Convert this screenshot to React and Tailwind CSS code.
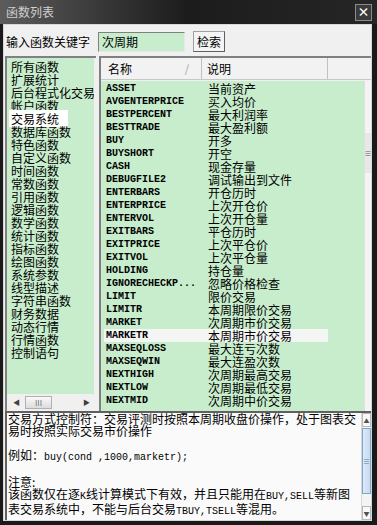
import React from "react";

const CN = { fontFamily: '"Noto Sans CJK SC", "Noto Sans", sans-serif' };
const MONO = { fontFamily: '"Liberation Mono", "DejaVu Sans Mono", monospace' };

const CATS = [
  "所有函数", "扩展统计", "后台程式化交易", "帐户函数", "交易系统", "数据库函数",
  "特色函数", "自定义函数", "时间函数", "常数函数", "引用函数", "逻辑函数",
  "数学函数", "统计函数", "指标函数", "绘图函数", "系统参数", "线型描述",
  "字符串函数", "财务数据", "动态行情", "行情函数", "控制语句",
];

const FUNCS = [
  ["ASSET", "当前资产"],
  ["AVGENTERPRICE", "买入均价"],
  ["BESTPERCENT", "最大利润率"],
  ["BESTTRADE", "最大盈利额"],
  ["BUY", "开多"],
  ["BUYSHORT", "开空"],
  ["CASH", "现金存量"],
  ["DEBUGFILE2", "调试输出到文件"],
  ["ENTERBARS", "开仓历时"],
  ["ENTERPRICE", "上次开仓价"],
  ["ENTERVOL", "上次开仓量"],
  ["EXITBARS", "平仓历时"],
  ["EXITPRICE", "上次平仓价"],
  ["EXITVOL", "上次平仓量"],
  ["HOLDING", "持仓量"],
  ["IGNORECHECKP...", "忽略价格检查"],
  ["LIMIT", "限价交易"],
  ["LIMITR", "本周期限价交易"],
  ["MARKET", "次周期市价交易"],
  ["MARKETR", "本周期市价交易"],
  ["MAXSEQLOSS", "最大连亏次数"],
  ["MAXSEQWIN", "最大连盈次数"],
  ["NEXTHIGH", "次周期最高交易"],
  ["NEXTLOW", "次周期最低交易"],
  ["NEXTMID", "次周期中价交易"],
];

function A({ children }) {
  // ascii runs inside the chinese help text
  return <span className="text-[10px]" style={MONO}>{children}</span>;
}

export default function App() {
  return (
    <div className="w-[377px] h-[525px] bg-[#1a1a1a] flex flex-col overflow-hidden" style={CN}>
      {/* title bar */}
      <div className="h-[24px] shrink-0 flex items-center justify-between pl-[6px] pr-[5px] bg-gradient-to-r from-[#5c5c5c] via-[#1c1c1c] to-[#262626]">
        <span className="text-[12px] leading-none text-[#cfcfcf]">函数列表</span>
        <div className="w-[17px] h-[17px] border border-[#8a8a8a] bg-[#3a3a3a] flex items-center justify-center text-white text-[12px] font-bold leading-none">
          ×
        </div>
      </div>

      <div className="flex-1 min-h-0 ml-[3px] mr-[5px] mb-[4px] bg-[#f0f0f0] border border-[#d8d8d8] flex flex-col">
        {/* search row */}
        <div className="h-[31px] shrink-0 flex items-center pl-[2px] pt-[2px] text-[12px] text-black">
          <span className="w-[92px]">输入函数关键字</span>
          <div className="w-[87px] h-[20px] bg-[#c7edcc] border-t border-l border-[#808080] border-b border-r border-b-[#e8e8e8] border-r-[#e8e8e8] flex items-center pl-[3px]">
            次周期
          </div>
          <div className="ml-[8px] w-[32px] h-[21px] bg-[#f4f4f4] border border-[#a0a0a0] border-r-[#606060] border-b-[#606060] flex items-center justify-center">
            检索
          </div>
        </div>

        {/* lists */}
        <div className="h-[355px] shrink-0 flex pl-[1px] gap-[3px]">
          {/* category list */}
          <div className="w-[91px] flex flex-col border-t-2 border-l-2 border-[#808080] bg-[#f0f0f0]">
            <div className="flex-1 bg-[#c7edcc] overflow-hidden pt-[2px] pl-[4px] text-[12px] leading-[13px] text-black whitespace-nowrap mr-[2px]">
              {CATS.map((c) => (
                <div key={c} className="h-[13px]">
                  <span className={c === "交易系统" ? "bg-white pl-[2px] pr-[9px] -ml-[2px]" : ""}>{c}</span>
                </div>
              ))}
            </div>
            <div className="h-[17px] shrink-0 flex items-center bg-[#f0f0f0] px-[6px] text-[#404040]">
              <span className="text-[7px] w-[10px]">◀</span>
              <div className="w-[27px] h-[13px] ml-[2px] border border-[#b0b0b0] bg-gradient-to-b from-[#fafafa] to-[#dcdcdc] flex items-center justify-center text-[8px] leading-none text-[#707070]">
                III
              </div>
              <div className="flex-1" />
              <span className="text-[7px]">▶</span>
            </div>
          </div>

          {/* function list */}
          <div className="flex-1 flex flex-col border-t-2 border-l-2 border-[#808080] bg-[#f0f0f0]">
            <div className="h-[22px] shrink-0 flex items-center text-[12px] text-black border-b border-[#c8c8c8] bg-[#f2f2f2]">
              <div className="w-[101px] h-full flex items-center justify-between pl-[7px] pr-[12px] border-r border-[#c0c0c0]">
                <span>名称</span>
                <span className="text-[#a0a0a0] text-[11px]">/</span>
              </div>
              <div className="w-[126px] h-full flex items-center pl-[5px] border-r border-[#c0c0c0]">说明</div>
            </div>
            <div className="flex-1 flex min-h-0 pt-[1px]">
              <div className="flex-1 bg-[#c7edcc] pt-[1px] pl-[3px] overflow-hidden">
                {FUNCS.map(([n, d]) => (
                  <div
                    key={n}
                    className={`h-[13px] w-[224px] flex items-center text-black ${n === "MARKETR" ? "bg-[#f4f6f4]" : ""}`}
                  >
                    <span className="w-[104px] pl-[2px] text-[10px] font-bold whitespace-nowrap" style={MONO}>{n}</span>
                    <span className="text-[12px] leading-[13px] whitespace-nowrap">{d}</span>
                  </div>
                ))}
              </div>
              <div className="w-[7px] shrink-0 bg-[#f4f4f4] border-l border-[#e0e0e0] flex flex-col">
                <div className="h-[52px]" />
                <div className="h-[40px] bg-[#e8e8e8] flex items-center justify-center text-[7px] leading-none text-[#606060]">≡</div>
              </div>
            </div>
          </div>
        </div>

        {/* help text */}
        <div className="flex-1 min-h-0 flex border-t-2 border-l-2 border-[#606060] bg-[#fafafa] ml-[1px]">
          <div className="flex-1 pl-[1px] text-[12px] leading-[12px] text-black whitespace-nowrap overflow-hidden">
            <div>交易方式控制符：交易评测时按照本周期收盘价操作，处于图表交</div>
            <div>易时按照实际交易市价操作</div>
            <div className="h-[12px]" />
            <div>例如：<A>buy(cond ,1000,marketr);</A></div>
            <div className="h-[12px]" />
            <div>注意:</div>
            <div>该函数仅在逐<A>K</A>线计算模式下有效，并且只能用在<A>BUY,SELL</A>等新图</div>
            <div>表交易系统中，不能与后台交易<A>TBUY,TSELL</A>等混用。</div>
          </div>
          <div className="w-[10px] shrink-0 flex flex-col bg-[#f4f4f4] border-l border-[#d8d8d8]">
            <div className="h-[14px] border border-[#b8b8b8] bg-[#f8f8f8] flex items-center justify-center text-[6px] text-[#505050]">▲</div>
            <div className="h-[66px] mt-[1px] border border-[#7ea6c8] bg-gradient-to-r from-[#dceaf8] to-[#c6dcf2] flex items-center justify-center text-[7px] text-[#5080a8]">≡</div>
            <div className="flex-1" />
            <div className="h-[14px] border border-[#b8b8b8] bg-[#f8f8f8] flex items-center justify-center text-[6px] text-[#505050]">▼</div>
          </div>
        </div>
      </div>
    </div>
  );
}
